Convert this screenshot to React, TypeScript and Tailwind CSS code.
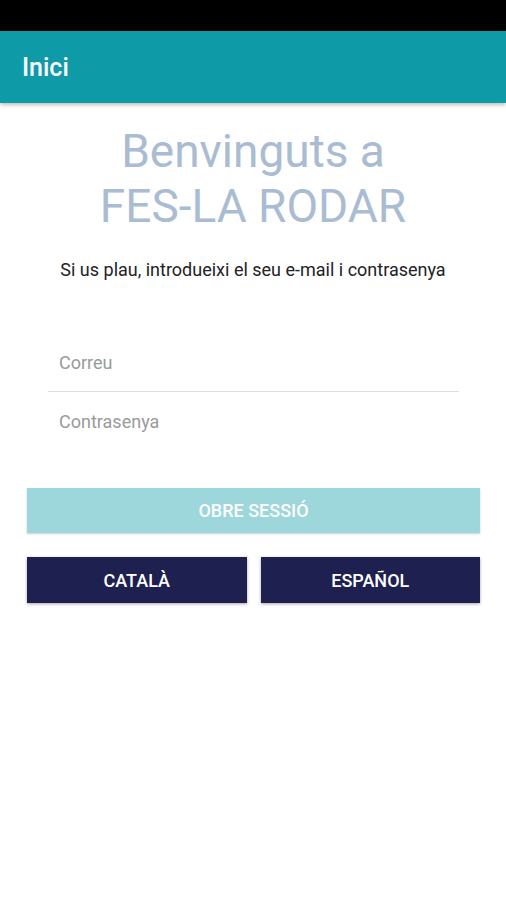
import React from 'react';

const font = { fontFamily: 'Roboto, "Liberation Sans", sans-serif' };

export default function App() {
  return (
    <div className="w-[506px] h-[900px] bg-white flex flex-col" style={font}>
      {/* Status bar */}
      <div className="h-[31px] bg-black" />

      {/* App bar */}
      <header className="h-[72px] bg-[#0e9aa7] flex items-center px-[22px] shadow-[0_2px_4px_rgba(0,0,0,0.25)] z-10">
        <h1 className="text-[25px] font-medium text-white leading-none">Inici</h1>
      </header>

      {/* Content */}
      <main className="flex flex-col">
        <div className="pt-[21px] text-center text-[#a9bcd2] text-[46px] leading-[55px]">
          <p>Benvinguts a</p>
          <p>FES-LA RODAR</p>
        </div>

        <p className="mt-[25px] text-center text-[18px] leading-[22px] text-[#222222]">
          Si us plau, introdueixi el seu e-mail i contrasenya
        </p>

        <div className="mt-[52px] ml-[48px] mr-[47px] flex flex-col">
          <input
            type="email"
            placeholder="Correu"
            className="h-[59px] px-[11px] text-[18px] text-[#333] placeholder:text-[#9a9a9a] border-b border-[#dedede] outline-none bg-transparent"
          />
          <input
            type="password"
            placeholder="Contrasenya"
            className="h-[58px] px-[11px] text-[18px] text-[#333] placeholder:text-[#9a9a9a] outline-none bg-transparent"
          />
        </div>

        <div className="mt-[38px] ml-[27px] mr-[26px] flex flex-col gap-[24px]">
          <button className="h-[45px] bg-[#9dd6db] text-white text-[18px] font-medium uppercase shadow-[0_1px_2px_rgba(0,0,0,0.2)]">
            Obre sessió
          </button>
          <div className="flex gap-[14px]">
            <button className="flex-1 h-[46px] bg-[#1e2150] text-white text-[18px] font-medium uppercase shadow-[0_1px_3px_rgba(0,0,0,0.35)]">
              Català
            </button>
            <button className="flex-1 h-[46px] bg-[#1e2150] text-white text-[18px] font-medium uppercase shadow-[0_1px_3px_rgba(0,0,0,0.35)]">
              Español
            </button>
          </div>
        </div>
      </main>
    </div>
  );
}
